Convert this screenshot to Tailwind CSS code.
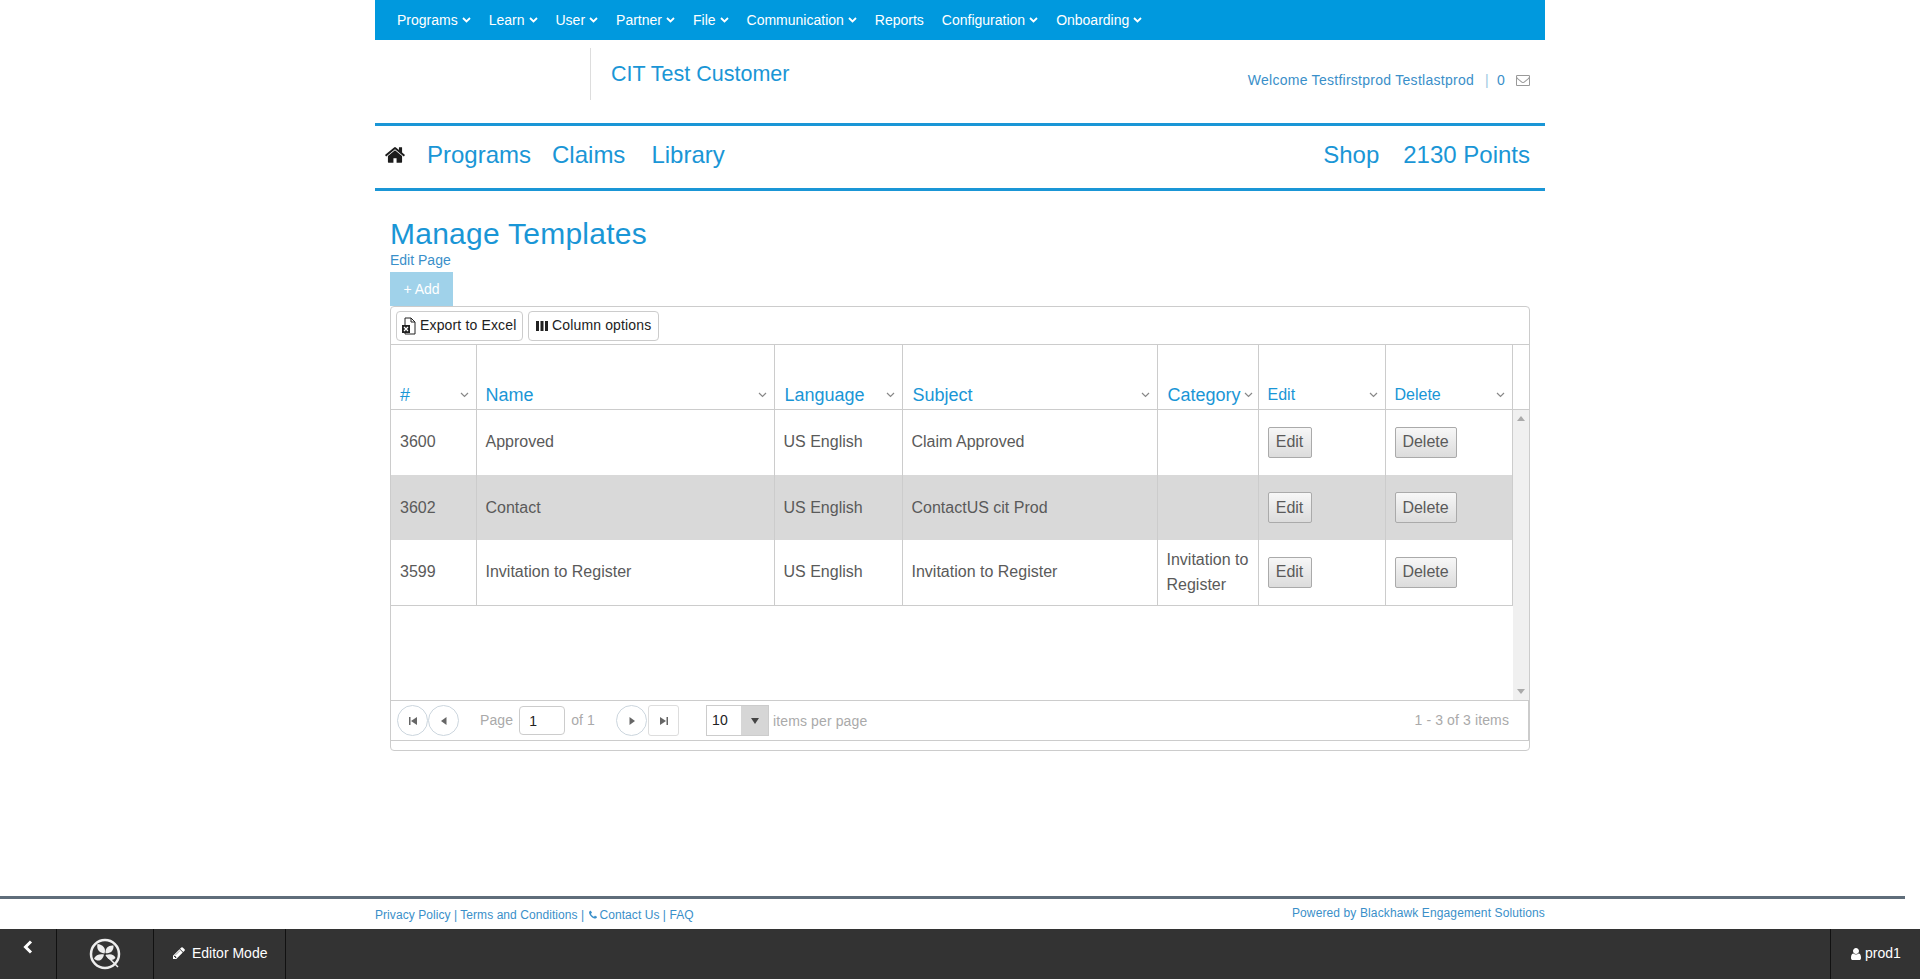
<!DOCTYPE html>
<html lang="en">
<head>
    <meta charset="UTF-8">
    <title>Manage Templates</title>
    <script src="https://cdn.jsdelivr.net/npm/@tailwindcss/browser@4"></script>
</head>
<body class="h-[979px] overflow-hidden bg-white font-['Liberation_Sans',Arial,sans-serif] flex flex-col">
    <main class="flex-1 w-[1170px] ml-[375px]">
        <!-- admin menu -->
        <nav class="h-10 bg-[#0099de] flex items-center pl-[22px] text-[14px] text-white">
            <a class="mr-[18px] flex items-center gap-[4px]">Programs <svg class="w-[9px] h-[6px]" viewBox="0 0 9 6"><path d="M1 1l3.500 3.500L8 1" fill="none" stroke="currentColor" stroke-width="1.800"/></svg></a>
            <a class="mr-[18px] flex items-center gap-[4px]">Learn <svg class="w-[9px] h-[6px]" viewBox="0 0 9 6"><path d="M1 1l3.500 3.500L8 1" fill="none" stroke="currentColor" stroke-width="1.800"/></svg></a>
            <a class="mr-[18px] flex items-center gap-[4px]">User <svg class="w-[9px] h-[6px]" viewBox="0 0 9 6"><path d="M1 1l3.500 3.500L8 1" fill="none" stroke="currentColor" stroke-width="1.800"/></svg></a>
            <a class="mr-[18px] flex items-center gap-[4px]">Partner <svg class="w-[9px] h-[6px]" viewBox="0 0 9 6"><path d="M1 1l3.500 3.500L8 1" fill="none" stroke="currentColor" stroke-width="1.800"/></svg></a>
            <a class="mr-[18px] flex items-center gap-[4px]">File <svg class="w-[9px] h-[6px]" viewBox="0 0 9 6"><path d="M1 1l3.500 3.500L8 1" fill="none" stroke="currentColor" stroke-width="1.800"/></svg></a>
            <a class="mr-[18px] flex items-center gap-[4px]">Communication <svg class="w-[9px] h-[6px]" viewBox="0 0 9 6"><path d="M1 1l3.500 3.500L8 1" fill="none" stroke="currentColor" stroke-width="1.800"/></svg></a>
            <a class="mr-[18px]">Reports</a>
            <a class="mr-[18px] flex items-center gap-[4px]">Configuration <svg class="w-[9px] h-[6px]" viewBox="0 0 9 6"><path d="M1 1l3.500 3.500L8 1" fill="none" stroke="currentColor" stroke-width="1.800"/></svg></a>
            <a class="flex items-center gap-[4px]">Onboarding <svg class="w-[9px] h-[6px]" viewBox="0 0 9 6"><path d="M1 1l3.500 3.500L8 1" fill="none" stroke="currentColor" stroke-width="1.800"/></svg></a>
        </nav>

        <!-- customer header -->
        <header class="h-[83px] flex border-b-[3px] border-[#1a96d6] box-content -mb-[3px]">
            <div class="w-[216px] h-[52px] mt-2 border-r border-[#ddd]"></div>
            <div class="ml-[20px] mt-[22px] text-[21.5px] leading-6 text-[#1a96d6]">CIT Test Customer</div>
            <div class="ml-auto mr-[15px] mt-[30px] h-5 flex items-center text-[14px] tracking-[0.27px] text-[#3a8fc9]">
                <span>Welcome Testfirstprod Testlastprod</span>
                <span class="ml-[11px] text-[#9cc6e2]">|</span>
                <span class="ml-[8px]">0</span>
                <svg class="ml-[11px] w-[14px] h-[14px] text-[#999]" viewBox="0 0 1792 1792"><path fill="currentColor" d="M1664 1504v-768q-32 36-69 66-268 206-426 338-51 43-83 67t-86.500 48.500-102.500 24.500h-2q-48 0-102.500-24.500t-86.500-48.500-83-67q-158-132-426-338-37-30-69-66v768q0 13 9.500 22.500t22.500 9.500h1472q13 0 22.500-9.500t9.500-22.500zm0-1051v-24.500l-.5-13-3-12.500-5.500-9-9-7.500-14-2.500h-1472q-13 0-22.500 9.500t-9.500 22.500q0 168 147 284 193 152 401 317 6 5 35 29.500t46 37.500 44.500 31.500 50.500 27.500 43 9h2q20 0 43-9t50.500-27.500 44.500-31.500 46-37.500 35-29.500q208-165 401-317 54-43 100.500-115.500t46.500-131.500zm128-37v1088q0 66-47 113t-113 47h-1472q-66 0-113-47t-47-113v-1088q0-66 47-113t113-47h1472q66 0 113 47t47 113z"/></svg>
            </div>
        </header>

        <!-- main nav -->
        <nav class="mt-[3px] h-[65px] pb-[5px] box-border border-b-[3px] border-[#1a96d6] flex items-center text-[24px] text-[#1a96d6]">
            <svg class="ml-[9px] w-[22px] h-[22px] text-[#1c1c1c]" viewBox="0 0 1792 1792"><path fill="currentColor" d="M1472 992v480q0 26-19 45t-45 19h-384v-384h-256v384h-384q-26 0-45-19t-19-45v-480q0-1 .5-3t.5-3l575-474 575 474q1 2 1 6zm223-69l-62 74q-8 9-21 11h-3q-13 0-21-7l-692-577-692 577q-12 8-24 7-13-2-21-11l-62-74q-8-10-7-23.500t11-21.500l719-599q32-26 76-26t76 26l244 204v-195q0-14 9-23t23-9h192q14 0 23 9t9 23v408l219 182q10 8 11 21.500t-7 23.500z"/></svg>
            <a class="ml-[21px]">Programs</a>
            <a class="ml-[21px]">Claims</a>
            <a class="ml-[26px]">Library</a>
            <a class="ml-auto">Shop</a>
            <a class="ml-[24px] mr-[15px]">2130 Points</a>
        </nav>

        <section class="px-[15px]">
            <h1 class="mt-[24px] text-[30px] leading-[38px] tracking-[0.25px] text-[#1a96d6]">Manage Templates</h1>
            <a class="block text-[14px] leading-4 text-[#3a8fc9] -mt-[1px]">Edit Page</a>
            <button class="block mt-[4px] w-[63px] h-[34px] bg-[#a0d2ea] text-white text-[14px]">+ Add</button>

            <!-- grid -->
            <div class="h-[445px] border border-[#ccc] rounded-[4px] text-[16px] text-[#5a5a5a]">
                <div class="h-[37px] flex items-center gap-[5px] pl-[5px] text-[14px] tracking-[0.15px] text-[#222]">
                    <button class="h-[30px] w-[127px] px-[4px] flex items-center gap-[4px] border border-[#ccc] rounded-[4px]">
                        <svg class="w-[15px] h-[18px]" viewBox="0 0 15 18"><path d="M4 1h6l4 4v12H4z" fill="none" stroke="#222"/><path d="M10 1v4h4" fill="none" stroke="#222"/><rect x="1" y="8" width="8" height="8" fill="#222"/><path d="M3 10l4 4M7 10l-4 4" stroke="#fff" stroke-width="1.200"/></svg>
                        Export to Excel
                    </button>
                    <button class="h-[30px] w-[131px] pl-[7px] flex items-center gap-[4px] border border-[#ccc] rounded-[4px]">
                        <svg class="w-[12px] h-[12px]" viewBox="0 0 12 12"><path d="M0 1h3v10H0zM4.500 1h3v10h-3zM9 1h3v10H9z" fill="#222"/></svg>
                        Column options
                    </button>
                </div>

                <table class="w-[1138px] table-fixed border-t border-b border-[#ccc] text-[18px] text-[#1a96d6]">
                    <colgroup><col class="w-[85px]"><col class="w-[298px]"><col class="w-[128px]"><col class="w-[255px]"><col class="w-[101px]"><col class="w-[127px]"><col class="w-[127px]"><col></colgroup>
                    <tr class="h-[65px]">
                        <th class="border-r border-[#ccc] align-bottom font-normal text-left pl-[9px]"><div class="flex items-center justify-between pr-[7px] leading-7">#<svg class="w-[9px] h-[6px] text-[#888]" viewBox="0 0 9 6"><path d="M1 1l3.500 3.500L8 1" fill="none" stroke="currentColor" stroke-width="1.200"/></svg></div></th>
                        <th class="border-r border-[#ccc] align-bottom font-normal text-left pl-[9px]"><div class="flex items-center justify-between pr-[7px] leading-7">Name<svg class="w-[9px] h-[6px] text-[#888]" viewBox="0 0 9 6"><path d="M1 1l3.500 3.500L8 1" fill="none" stroke="currentColor" stroke-width="1.200"/></svg></div></th>
                        <th class="border-r border-[#ccc] align-bottom font-normal text-left pl-[10px]"><div class="flex items-center justify-between pr-[7px] leading-7">Language<svg class="w-[9px] h-[6px] text-[#888]" viewBox="0 0 9 6"><path d="M1 1l3.500 3.500L8 1" fill="none" stroke="currentColor" stroke-width="1.200"/></svg></div></th>
                        <th class="border-r border-[#ccc] align-bottom font-normal text-left pl-[10px]"><div class="flex items-center justify-between pr-[7px] leading-7">Subject<svg class="w-[9px] h-[6px] text-[#888]" viewBox="0 0 9 6"><path d="M1 1l3.500 3.500L8 1" fill="none" stroke="currentColor" stroke-width="1.200"/></svg></div></th>
                        <th class="border-r border-[#ccc] align-bottom font-normal text-left pl-[10px]"><div class="flex items-center justify-between pr-[5px] leading-7">Category<svg class="w-[9px] h-[6px] text-[#888]" viewBox="0 0 9 6"><path d="M1 1l3.500 3.500L8 1" fill="none" stroke="currentColor" stroke-width="1.200"/></svg></div></th>
                        <th class="border-r border-[#ccc] align-bottom font-normal text-left pl-[9px] text-[16px]"><div class="flex items-center justify-between pr-[7px] leading-7">Edit<svg class="w-[9px] h-[6px] text-[#888]" viewBox="0 0 9 6"><path d="M1 1l3.500 3.500L8 1" fill="none" stroke="currentColor" stroke-width="1.200"/></svg></div></th>
                        <th class="border-r border-[#ccc] align-bottom font-normal text-left pl-[9px] text-[16px]"><div class="flex items-center justify-between pr-[7px] leading-7">Delete<svg class="w-[9px] h-[6px] text-[#888]" viewBox="0 0 9 6"><path d="M1 1l3.500 3.500L8 1" fill="none" stroke="currentColor" stroke-width="1.200"/></svg></div></th>
                        <th></th>
                    </tr>
                </table>

                <div class="h-[290px] flex">
                    <table class="w-[1121px] h-max table-fixed border-collapse">
                        <colgroup><col class="w-[85px]"><col class="w-[298px]"><col class="w-[128px]"><col class="w-[255px]"><col class="w-[101px]"><col class="w-[127px]"><col class="w-[127px]"></colgroup>
                        <tr class="h-[65px] border-b border-transparent">
                            <td class="pl-[9px] border-r border-[#ccc]">3600</td>
                            <td class="pl-[9px] border-r border-[#ccc]">Approved</td>
                            <td class="pl-[9px] border-r border-[#ccc]">US English</td>
                            <td class="pl-[9px] border-r border-[#ccc]">Claim Approved</td>
                            <td class="pl-[9px] border-r border-[#ccc]"></td>
                            <td class="pl-[9px] border-r border-[#ccc]"><button class="h-[31px] w-[44px] border border-[#aaa] rounded-[2px] bg-gradient-to-b from-[#f7f7f7] to-[#dcdcdc]">Edit</button></td>
                            <td class="pl-[9px] border-r border-[#ccc]"><button class="h-[31px] w-[62px] border border-[#aaa] rounded-[2px] bg-gradient-to-b from-[#f7f7f7] to-[#dcdcdc]">Delete</button></td>
                        </tr>
                        <tr class="h-[65px] bg-[#d9d9d9]">
                            <td class="pl-[9px] border-r border-[#ccc]">3602</td>
                            <td class="pl-[9px] border-r border-[#ccc]">Contact</td>
                            <td class="pl-[9px] border-r border-[#ccc]">US English</td>
                            <td class="pl-[9px] border-r border-[#ccc]">ContactUS cit Prod</td>
                            <td class="pl-[9px] border-r border-[#ccc]"></td>
                            <td class="pl-[9px] border-r border-[#ccc]"><button class="h-[31px] w-[44px] border border-[#aaa] rounded-[2px] bg-gradient-to-b from-[#f7f7f7] to-[#dcdcdc]">Edit</button></td>
                            <td class="pl-[9px] border-r border-[#ccc]"><button class="h-[31px] w-[62px] border border-[#aaa] rounded-[2px] bg-gradient-to-b from-[#f7f7f7] to-[#dcdcdc]">Delete</button></td>
                        </tr>
                        <tr class="h-[65px] border-b border-[#ccc]">
                            <td class="pl-[9px] border-r border-[#ccc]">3599</td>
                            <td class="pl-[9px] border-r border-[#ccc]">Invitation to Register</td>
                            <td class="pl-[9px] border-r border-[#ccc]">US English</td>
                            <td class="pl-[9px] border-r border-[#ccc]">Invitation to Register</td>
                            <td class="pl-[9px] border-r border-[#ccc] leading-[25px]">Invitation to Register</td>
                            <td class="pl-[9px] border-r border-[#ccc]"><button class="h-[31px] w-[44px] border border-[#aaa] rounded-[2px] bg-gradient-to-b from-[#f7f7f7] to-[#dcdcdc]">Edit</button></td>
                            <td class="pl-[9px] border-r border-[#ccc]"><button class="h-[31px] w-[62px] border border-[#aaa] rounded-[2px] bg-gradient-to-b from-[#f7f7f7] to-[#dcdcdc]">Delete</button></td>
                        </tr>
                    </table>
                    <!-- scrollbar -->
                    <div class="flex-1 bg-[#f0f0f0] flex flex-col justify-between items-center py-[6px]">
                        <div class="w-0 h-0 border-x-[4px] border-x-transparent border-b-[5px] border-b-[#aaa]"></div>
                        <div class="w-0 h-0 border-x-[4px] border-x-transparent border-t-[5px] border-t-[#aaa]"></div>
                    </div>
                </div>

                <!-- pager -->
                <div class="h-[41px] border-t border-b border-r border-[#ccc] flex items-center pl-[6px] text-[14px] tracking-[0.12px] text-[#aaa]">
                    <button class="w-[31px] h-[31px] rounded-full border border-[#ccd6de] flex items-center justify-center"><svg class="w-2 h-2" viewBox="0 0 8 8"><path d="M0 0h1.500v8H0zM8 0v8L2 4z" fill="#666"/></svg></button>
                    <button class="w-[31px] h-[31px] rounded-full border border-[#ccd6de] flex items-center justify-center"><svg class="w-2 h-2" viewBox="0 0 8 8"><path d="M6.500 0v8L1 4z" fill="#666"/></svg></button>
                    <span class="ml-[21px]">Page</span>
                    <div class="ml-[6px] w-[46px] h-[29px] border border-[#ccc] rounded-[4px] pl-[9px] text-[#222] leading-[29px]">1</div>
                    <span class="ml-[6px]">of 1</span>
                    <button class="ml-[21px] w-[31px] h-[31px] rounded-full border border-[#ccd6de] flex items-center justify-center"><svg class="w-2 h-2" viewBox="0 0 8 8"><path d="M1.500 0v8L7 4z" fill="#666"/></svg></button>
                    <button class="ml-[1px] w-[31px] h-[31px] rounded-[3px] border border-[#ddd] flex items-center justify-center"><svg class="w-2 h-2" viewBox="0 0 8 8"><path d="M0 0v8l6-4zM6.500 0H8v8H6.500z" fill="#666"/></svg></button>
                    <div class="ml-[27px] w-[63px] h-[31px] border border-[#ccc] flex text-[#222]">
                        <span class="flex-1 pl-[5px] leading-[29px]">10</span>
                        <span class="w-[27px] bg-[#d6d6d6] flex items-center justify-center"><span class="w-0 h-0 border-x-[4px] border-x-transparent border-t-[6px] border-t-[#444]"></span></span>
                    </div>
                    <span class="ml-[4px] pt-[1px]">items per page</span>
                    <span class="ml-auto mr-[19px]">1 - 3 of 3 items</span>
                </div>
            </div>
        </section>
    </main>

    <!-- footer -->
    <footer class="w-[1905px] h-[33px] border-t-[3px] border-[#5f6d7a] text-[12px] text-[#3a8fc9]">
        <div class="w-[1170px] ml-[375px] flex justify-between">
            <div class="mt-[8px] leading-4 flex items-center tracking-[0.06px]">Privacy Policy | Terms and Conditions |&nbsp;<svg class="w-[10px] h-[10px]" viewBox="0 0 1792 1792"><path fill="currentColor" d="M1600 1240q0 27-10 70.500t-21 68.500q-21 50-122 106-94 51-186 51-27 0-53-3.500t-57.500-12.500-47-14.500-55.500-20.500-49-18q-98-35-175-83-127-79-264-216t-216-264q-48-77-83-175-3-9-18-49t-20.500-55.500-14.500-47-12.500-57.500-3.500-53q0-92 51-186 56-101 106-122 25-11 68.500-21t70.500-10q14 0 21 3 18 6 53 76 11 19 30 54t35 63.500 31 53.500q3 4 17.500 25t21.500 35.500 7 28.500q0 20-28.500 50t-62 55-62 53-28.500 46q0 9 5 22.500t8.500 20.500 14 24 11.500 19q76 137 174 235t235 174q2 1 19 11.500t24 14 20.500 8.500 22.500 5q18 0 46-28.500t53-62 55-62 50-28.500q14 0 28.500 7t35.500 21.500 25 17.500q25 15 53.500 31t63.500 35 54 30q70 35 76 53 3 7 3 21z"/></svg><span class="ml-[2px]">Contact Us | FAQ</span></div>
            <div class="mt-[6px] leading-4 tracking-[0.12px]">Powered by Blackhawk Engagement Solutions</div>
        </div>
    </footer>

    <!-- editor bar -->
    <div class="h-[50px] bg-[#333] flex text-white text-[14px]">
        <div class="w-[57px] border-r border-[#111] flex justify-center pt-[11px]">
            <svg class="w-[10px] h-[14px]" viewBox="0 0 10 14"><path d="M8 1.500L2.500 7 8 12.500" fill="none" stroke="#fff" stroke-width="3"/></svg>
        </div>
        <div class="w-[97px] border-r border-[#111] flex items-center justify-center">
            <svg class="w-[32px] h-[32px]" viewBox="0 0 32 32"><circle cx="16" cy="16" r="14" fill="none" stroke="#eee" stroke-width="2.500"/><g fill="#eee"><path d="M15.500 15.500C9 15 7.500 10 8.500 6c5 .5 9 4 7 9.500z"/><path d="M16.500 15c-.5-5 3-8 8-7.500 .5 5-3 8.500-8 7.500z"/><path d="M15 16.500c-3.500-1-8.500 0-10 4 3.500 4 9 2 10-4z"/><path d="M17 17c4.500-1.500 8-.5 9.500 3-3.500 3.500-8 2-9.500-3z"/></g><path d="M17 17l12 12" stroke="#eee" stroke-width="1.500"/></svg>
        </div>
        <div class="w-[132px] border-r border-[#111] flex items-center pl-[18px] pb-[2px] gap-[6px]">
            <svg class="w-[14px] h-[14px]" viewBox="0 0 1792 1792"><path fill="currentColor" d="M491 1536l91-91-235-235-91 91v107h128v128h107zm523-928q0-22-22-22-10 0-17 7l-542 542q-7 7-7 17 0 22 22 22 10 0 17-7l542-542q7-7 7-17zm-54-192l416 416-832 832h-416v-416zm683 96q0 53-37 90l-166 166-416-416 166-165q36-38 90-38 53 0 91 38l235 234q37 39 37 91z"/></svg>
            Editor Mode
        </div>
        <div class="ml-auto w-[90px] border-l border-[#111] flex items-center pl-[18px] pb-[1px] gap-[2px]">
            <svg class="w-[14px] h-[14px]" viewBox="0 0 1792 1792"><path fill="currentColor" d="M1536 1399q0 109-62.500 187t-150.500 78h-854q-88 0-150.500-78t-62.500-187q0-85 8.500-160.500t31.500-152 58.500-131 94-89 134.500-34.500q131 128 313 128t313-128q76 0 134.500 34.500t94 89 58.500 131 31.500 152 8.500 160.500zm-256-887q0 159-112.500 271.500t-271.500 112.500-271.500-112.500-112.500-271.500 112.500-271.500 271.500-112.500 271.500 112.500 112.500 271.500z"/></svg>
            prod1
        </div>
    </div>
</body>
</html>
